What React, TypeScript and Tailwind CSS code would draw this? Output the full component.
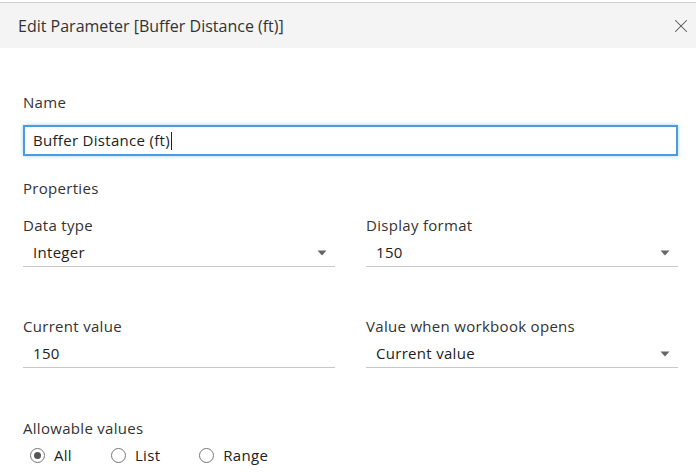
import { X } from 'lucide-react'

const font = { fontFamily: '"Open Sans", "Liberation Sans", sans-serif' }

function Caret() {
  return (
    <svg width="10" height="6" viewBox="0 0 10 6" className="shrink-0">
      <path d="M0.5 0.5 L9.5 0.5 L5 5.5 Z" fill="#666" />
    </svg>
  )
}

function Field({ label, value, select = false }: { label: string; value: string; select?: boolean }) {
  return (
    <div>
      <div className="text-[15px] leading-[20px] tracking-[0.3px] text-[#333]">{label}</div>
      <div className="mt-[5px] flex h-[27px] items-center justify-between border-b border-[#c8c8c8] pl-[10px] pr-[8px] pb-[1px]">
        <span className="text-[15px] tracking-[0.3px] text-[#222]">{value}</span>
        {select && <Caret />}
      </div>
    </div>
  )
}

function Radio({ label, checked = false }: { label: string; checked?: boolean }) {
  return (
    <label className="flex items-center gap-[9px]">
      <span className="flex h-[15px] w-[15px] items-center justify-center rounded-full border border-[#777] bg-white">
        {checked && <span className="h-[7px] w-[7px] rounded-full bg-[#555]" />}
      </span>
      <span className="text-[15px] tracking-[0.3px] text-[#222]">{label}</span>
    </label>
  )
}

export default function App() {
  return (
    <div className="h-[472px] w-[696px] overflow-hidden bg-white pt-[2px]" style={font}>
      <div className="flex h-[46px] items-center justify-between border-t border-[#cfcfcf] bg-[#f4f4f4] pl-[18px] pr-[4px]">
        <span className="text-[16px] text-[#333]">Edit Parameter [Buffer Distance (ft)]</span>
        <X size={22} strokeWidth={1.1} color="#555" />
      </div>

      <div className="px-[23px] pr-[18px]">
        <div className="mt-[44px] text-[15px] leading-[20px] tracking-[0.3px] text-[#333]">Name</div>
        <div className="mt-[13px] flex h-[31px] items-center border-2 border-[#4a9be0] pl-[8px] shadow-[0_0_4px_rgba(74,155,224,0.45)]">
          <span className="text-[15px] tracking-[0.3px] text-[#222]">Buffer Distance (ft)</span>
          <span className="ml-[1px] h-[18px] w-px bg-[#222]" />
        </div>

        <div className="mt-[22px] text-[15px] leading-[20px] tracking-[0.3px] text-[#333]">Properties</div>

        <div className="mt-[17px] grid grid-cols-2 gap-x-[31px] gap-y-[49px]">
          <Field label="Data type" value="Integer" select />
          <Field label="Display format" value="150" select />
          <Field label="Current value" value="150" />
          <Field label="Value when workbook opens" value="Current value" select />
        </div>

        <div className="mt-[50px] text-[15px] leading-[20px] tracking-[0.3px] text-[#333]">Allowable values</div>
        <div className="mt-[6px] flex items-center gap-[39px] pl-[7px]">
          <Radio label="All" checked />
          <Radio label="List" />
          <Radio label="Range" />
        </div>
      </div>
    </div>
  )
}
